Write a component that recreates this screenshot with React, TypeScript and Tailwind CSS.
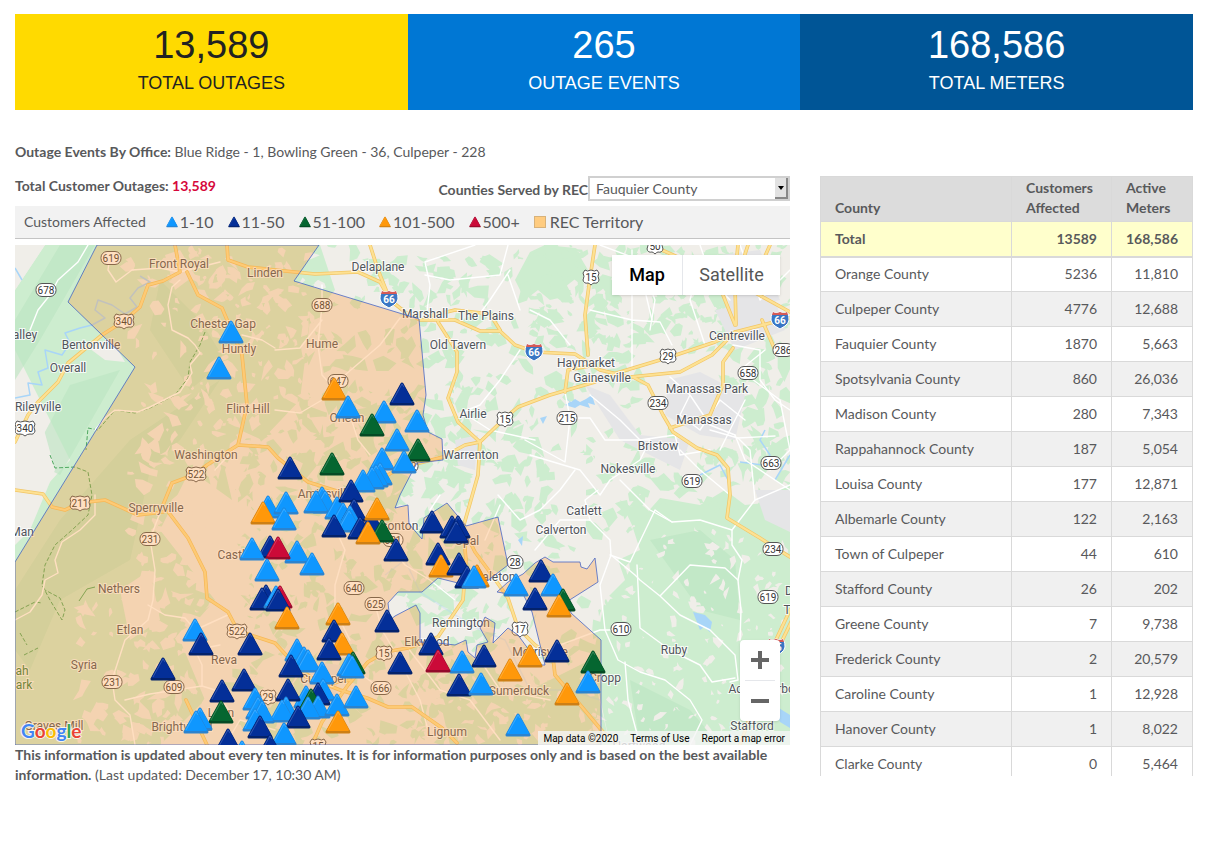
import React from "react";

interface StatProps {
    value: string;
    label: string;
    className: string;
}

type Level = "low" | "medium" | "high" | "severe" | "extreme";

const levelColors: Record<Level, { fill: string; edge: string }> = {
    low: { fill: "#0f97ff", edge: "#2b83cf" },
    medium: { fill: "#042f98", edge: "#04226b" },
    high: { fill: "#056630", edge: "#044a24" },
    severe: { fill: "#ff980a", edge: "#cd7f14" },
    extreme: { fill: "#cb0a38", edge: "#930a2b" },
};

const legend: { level: Level; label: string }[] = [
    { level: "low", label: "1-10" },
    { level: "medium", label: "11-50" },
    { level: "high", label: "51-100" },
    { level: "severe", label: "101-500" },
    { level: "extreme", label: "500+" },
];

const counties = [
    ["Orange County", "5236", "11,810"],
    ["Culpeper County", "4776", "12,688"],
    ["Fauquier County", "1870", "5,663"],
    ["Spotsylvania County", "860", "26,036"],
    ["Madison County", "280", "7,343"],
    ["Rappahannock County", "187", "5,054"],
    ["Louisa County", "177", "12,871"],
    ["Albemarle County", "122", "2,163"],
    ["Town of Culpeper", "44", "610"],
    ["Stafford County", "26", "202"],
    ["Greene County", "7", "9,738"],
    ["Frederick County", "2", "20,579"],
    ["Caroline County", "1", "12,928"],
    ["Hanover County", "1", "8,022"],
    ["Clarke County", "0", "5,464"],
];

// drawn in order, later markers lie on top
const markers: [Level, number, number][] = [
    ["low", 231, 332], ["low", 219, 368],
    ["severe", 334, 389], ["low", 348, 407], ["low", 384, 412],
    ["medium", 402, 394], ["high", 372, 425], ["low", 417, 421],
    ["low", 397, 440], ["high", 418, 450], ["low", 382, 459],
    ["low", 404, 462], ["medium", 290, 468], ["high", 332, 464],
    ["low", 380, 474], ["low", 376, 476], ["low", 372, 478],
    ["low", 363, 481], ["low", 268, 507], ["severe", 263, 513],
    ["low", 286, 503], ["low", 284, 519], ["low", 322, 498],
    ["low", 325, 502], ["low", 316, 502], ["low", 337, 508],
    ["low", 343, 514], ["medium", 351, 491], ["medium", 354, 510],
    ["low", 350, 517], ["low", 349, 521], ["medium", 334, 526],
    ["medium", 360, 528], ["medium", 372, 523], ["severe", 377, 509],
    ["high", 382, 531], ["severe", 368, 533], ["medium", 396, 550],
    ["medium", 432, 522], ["medium", 452, 527], ["medium", 458, 527],
    ["medium", 456, 532], ["medium", 438, 554], ["severe", 441, 566],
    ["medium", 459, 564], ["medium", 467, 577], ["severe", 477, 576],
    ["low", 474, 577], ["low", 516, 585], ["medium", 541, 571],
    ["medium", 535, 599], ["low", 553, 585], ["high", 563, 600],
    ["severe", 559, 606], ["medium", 557, 651], ["high", 593, 662],
    ["low", 588, 682], ["severe", 567, 694], ["severe", 530, 656],
    ["severe", 510, 670], ["medium", 484, 656], ["low", 462, 662],
    ["medium", 431, 644], ["extreme", 438, 661], ["medium", 400, 663],
    ["medium", 459, 685], ["low", 481, 684], ["low", 518, 725],
    ["medium", 387, 621], ["low", 297, 552], ["low", 312, 564],
    ["medium", 270, 547], ["extreme", 278, 548], ["low", 252, 549],
    ["low", 267, 570], ["medium", 266, 596], ["medium", 262, 599],
    ["low", 276, 597], ["extreme", 280, 597], ["medium", 278, 600],
    ["severe", 287, 618], ["severe", 338, 614], ["medium", 334, 631],
    ["severe", 342, 644], ["medium", 329, 649], ["low", 297, 650],
    ["low", 304, 658], ["low", 308, 661], ["medium", 291, 666],
    ["low", 322, 673], ["high", 353, 663], ["low", 349, 665],
    ["low", 352, 667], ["low", 323, 690], ["medium", 318, 694],
    ["low", 306, 697], ["high", 311, 700], ["low", 318, 707],
    ["low", 308, 708], ["low", 337, 705], ["low", 356, 697],
    ["medium", 288, 690], ["severe", 338, 722], ["low", 286, 708],
    ["low", 282, 711], ["medium", 298, 717], ["low", 284, 734],
    ["low", 195, 630], ["medium", 201, 644], ["medium", 250, 644],
    ["medium", 163, 669], ["medium", 244, 680], ["medium", 222, 691],
    ["high", 221, 712], ["low", 200, 719], ["low", 196, 722],
    ["low", 255, 699], ["low", 258, 708], ["low", 262, 712],
    ["low", 255, 720], ["medium", 260, 727], ["medium", 270, 746],
    ["low", 242, 752], ["medium", 228, 740],
];

const towns: [string, number, number][] = [
    ["Front Royal", 179, 268], ["Linden", 265, 277], ["Chester Gap", 223, 328],
    ["Huntly", 239, 353], ["Hume", 322, 348], ["Bentonville", 91, 349],
    ["Overall", 68, 372], ["alley", 25, 339], ["Rileyville", 38, 411],
    ["Flint Hill", 248, 413], ["Washington", 206, 459], ["Orlean", 347, 422],
    ["Sperryville", 156, 512], ["Nethers", 119, 593], ["Etlan", 130, 634],
    ["Syria", 84, 669], ["Man", 22, 536], ["Castleton", 243, 559],
    ["Reva", 224, 664], ["Graves Mill", 54, 730], ["Brightwood", 182, 731],
    ["Leon", 221, 717], ["Amissville", 325, 498], ["Jeffersonton", 384, 530],
    ["Delaplane", 378, 271], ["Marshall", 425, 318], ["The Plains", 486, 320],
    ["Old Tavern", 458, 349], ["Haymarket", 586, 367], ["Gainesville", 602, 382],
    ["Centreville", 737, 340], ["Manassas Park", 707, 393],
    ["Manassas", 704, 424], ["Airlie", 473, 418], ["Bristow", 658, 450],
    ["Nokesville", 628, 473], ["Warrenton", 471, 459], ["Catlett", 584, 515],
    ["Calverton", 561, 534], ["Opal", 467, 545], ["Bealeton", 492, 581],
    ["Remington", 461, 627], ["Elkwood", 427, 646], ["Morrisville", 540, 656],
    ["Culpeper", 324, 683], ["Sumerduck", 519, 695], ["Cropp", 605, 682],
    ["Lignum", 447, 736], ["Ruby", 674, 654], ["Aquia Harbour", 767, 693],
    ["Stafford", 752, 730], ["Hartwood", 639, 750], ["D", 789, 595], ["T", 787, 614],
];

type ShieldKind = "state" | "us" | "interstate";

const shields: [ShieldKind, string, number, number][] = [
    ["state", "619", 111, 258], ["state", "678", 46, 290], ["us", "340", 124, 321],
    ["us", "340", 25, 428], ["state", "688", 322, 305], ["state", "647", 338, 381],
    ["us", "522", 196, 474], ["us", "211", 80, 503], ["state", "231", 150, 539],
    ["state", "231", 112, 682], ["state", "609", 174, 687], ["us", "522", 237, 631],
    ["state", "640", 354, 588], ["state", "625", 375, 604], ["us", "15", 384, 653],
    ["state", "666", 381, 688], ["us", "29", 268, 697], ["state", "621", 393, 540],
    ["us", "15", 591, 277], ["us", "50", 655, 246], ["us", "29", 668, 356],
    ["state", "234", 658, 403], ["state", "658", 748, 373], ["state", "286", 783, 350],
    ["us", "15", 505, 419], ["state", "215", 567, 418], ["state", "663", 771, 463],
    ["state", "619", 692, 481], ["state", "234", 773, 549], ["state", "28", 515, 562],
    ["us", "17", 520, 629], ["state", "610", 621, 629], ["state", "619", 768, 597],
    ["state", "802", 408, 466], ["us", "15", 318, 746],
    ["interstate", "66", 389, 299], ["interstate", "66", 534, 352],
    ["interstate", "66", 780, 320], ["interstate", "95", 776, 647],
];

const highways = [
    "M227 245 228 260 248 267 275 270 315 274 358 272 380 282 390 300 405 312 420 320 455 320 480 331 500 331 515 345 535 352 575 354 600 370 630 377 680 372 712 355 735 332 790 318",
    "M370 245 378 270 390 300M430 316 455 310 490 314 500 330",
    "M175 245 180 272 163 281 148 285 140 307 124 321 102 335 68 363 58 382 38 402 28 415 15 442",
    "M187 272 198 295 222 308 242 355 247 405 238 445 207 465 196 474 172 483 163 505 188 538 205 572 207 598 228 612 238 631 275 643 298 668 322 685",
    "M238 445 268 447 278 458 308 482 340 492 365 488 400 468 443 457 465 445 480 442",
    "M15 490 43 494 52 507 65 510 80 503 105 500 138 515 163 512",
    "M438 322 457 352 457 372 448 398 458 422 480 442 478 475 463 528 475 552 492 575 508 598 518 628 535 645 553 658 555 675 603 732 620 745",
    "M480 442 505 418 518 407 550 395 595 382M610 375 670 357 715 342 735 332",
    "M595 245 590 278 585 315 588 355M595 365 568 370 565 392",
    "M633 377 648 385 663 415 673 432 697 448 717 455 728 468 730 495 727 518 760 538 790 557",
    "M733 348 723 362 723 385 710 415 670 428",
    "M463 528 466 560 463 600 438 637 408 648 385 652 368 662 348 685 322 722 312 745",
    "M300 674 340 690 367 698 388 707 412 707 442 728 457 743",
    "M738 245 735 275 723 295 735 325M748 245 735 285 736 325M770 245 750 290 790 312M762 320 775 350M655 247 680 258 712 290",
    "M790 610 775 642 760 690 748 722 740 745M793 618 780 645",
    "M207 745 186 700M322 685 350 680",
];

const roads = [
    "M88 245 78 262 58 280 50 295 38 310 30 330M110 255 108 270 116 282 132 270 160 268 180 272 220 262",
    "M180 280 172 287 168 305 172 330 188 338 195 345 200 353 190 365 192 373 180 392 150 407 138 412 115 410 105 418 95 430",
    "M242 335 262 340 275 348M322 285 322 305 318 345 322 375 345 400 358 440 370 455 M275 350 300 348 322 320",
    "M475 245 425 262 430 285 427 312M425 275 450 280 500 275 508 245M510 270 490 300 475 320M508 275 520 310",
    "M275 410 300 413 322 400 345 375 380 345 400 318M238 445 215 470M520 350 500 380 480 405 462 412 490 430 535 440",
    "M590 310 632 320 660 322 672 345M632 250 632 370M600 245 640 260 655 300 650 330M700 260 690 300 700 330 705 345",
    "M530 310 550 320 570 345M640 270 652 320M590 395 620 420 640 440 675 435 680 455 710 450",
    "M565 392 570 418 565 462 525 440M570 418 590 418 605 440 650 440 640 460 610 480 600 495 580 470 530 455",
    "M670 377 690 395 710 425 735 435M690 395 680 415 700 430 720 400 745 420M733 345 760 350 760 380 775 400 790 410",
    "M735 435 745 460 790 490M710 430 738 438 775 436M730 495 700 470 680 450",
    "M590 520 585 500 598 490M620 480 650 510 672 522 700 520 732 530 755 500 790 485",
    "M672 522 655 510M655 510 630 562 610 555M590 520 610 540 611 555 600 585 605 630 618 660 640 672 665 680 690 700 702 720 690 745",
    "M611 555 635 575 640 580 660 596 690 565 725 568 738 580 741 610 740 640M660 596 680 615 710 630 735 655 738 680 730 682",
    "M637 565 640 628 670 650 700 665 712 682 735 678M560 645 600 630 625 630M625 662 628 700 640 745",
    "M732 530 732 545 742 560 738 580M738 438 750 450 755 500",
    "M163 505 150 539 155 570 153 600 148 620 125 640 112 680 115 700 130 715 135 745M148 605 165 615 185 618 195 630 230 614",
    "M125 700 150 694 202 686 202 665 195 650 220 645M202 686 215 690 230 712",
    "M95 495 95 515 80 530 62 542 55 560 58 573 45 580 42 595 30 612 15 620",
    "M322 500 345 550 335 585 335 610 350 640M370 520 405 565 430 580 455 600M375 604 382 630 395 652 420 700 428 730",
    "M440 495 430 510M500 505 485 540M498 495 520 520 540 510 560 490 575 470M535 550 560 520 590 520",
    "M408 648 440 690 470 700 500 740M340 640 355 670 380 688M275 730 240 720 225 745M480 660 500 690 550 700",
    "M740 245 760 300 790 270M700 245 712 280 730 300M765 350 740 370 780 400 790 450 770 470M745 400 720 450",
];

// pseudo random patches of woodland or clearing, stable between renders
const scatter = (
    seed: number,
    count: number,
    [x0, y0, x1, y1]: number[],
    size: number
) => {
    let state = seed;
    const next = () => {
        state = (state * 1103515245 + 12345) % 2147483648;
        return state / 2147483648;
    };
    let d = "";
    for (let i = 0; i < count; i++) {
        const cx = x0 + next() * (x1 - x0);
        const cy = y0 + next() * (y1 - y0);
        const scale = size * (0.3 + next());
        const turn = next() * Math.PI;
        const points: string[] = [];
        for (let k = 0; k < 6; k++) {
            const angle = (k / 6) * Math.PI * 2;
            const radius = scale * (0.15 + next());
            const px = Math.cos(angle) * radius;
            const py = Math.sin(angle) * radius * 0.6;
            points.push(
                `${(cx + px * Math.cos(turn) - py * Math.sin(turn)).toFixed(1)} ${(
                    cy +
                    px * Math.sin(turn) +
                    py * Math.cos(turn)
                ).toFixed(1)}`
            );
        }
        d += `M${points.join(" ")}Z`;
    }
    return d;
};

const woods = [
    scatter(11, 230, [300, 245, 540, 520], 13),
    scatter(23, 190, [530, 245, 730, 350], 12),
    scatter(29, 40, [730, 245, 790, 350], 9),
    scatter(37, 110, [490, 350, 640, 540], 12),
    scatter(41, 60, [640, 440, 790, 520], 13),
    scatter(59, 330, [240, 400, 470, 745], 13),
    scatter(67, 110, [380, 540, 600, 745], 12),
    scatter(71, 50, [720, 350, 790, 460], 14),
].join("");

const clearings = [
    scatter(83, 190, [130, 400, 260, 745], 11),
    scatter(89, 130, [130, 250, 330, 400], 10),
    scatter(97, 130, [590, 520, 790, 745], 7),
    scatter(101, 70, [400, 670, 600, 745], 9),
    scatter(103, 50, [80, 600, 200, 745], 12),
].join("");

const territory =
    "M97 245 68 302 135 367 15 562V745H601V640L571 613 568 601 598 582 595 558 587 569 581 567 580 562H553L545 557 535 563 523 574 508 582 497 592 515 595 522 592 532 612 545 665H540L518 635 508 628 493 643 495 623 485 617 480 628 488 642 477 645 475 658 468 652 466 640 455 645 438 643 420 642V613L416 605 395 616 390 620 388 603 398 592H422L438 578 458 583 482 585 508 565 498 517 466 526 447 503 424 518 422 539 409 524 408 505 395 508 400 495 412 472 417 463 443 460 442 439 428 432 423 415 426 395 419 319 294 281 319 245Z";

const Triangle: React.FC<{ level: Level }> = ({ level }) => (
    <>
        <path
            d="M-11 10 0-10 11 10Z"
            fill={levelColors[level].edge}
            stroke={levelColors[level].edge}
            strokeWidth="3"
            strokeLinejoin="round"
        />
        <path
            d="M-10 8 0-10 10 8Z"
            fill={levelColors[level].fill}
            stroke={levelColors[level].fill}
            strokeWidth="2"
            strokeLinejoin="round"
        />
        <path
            d="M-10 8 0-10 2-7"
            fill="none"
            stroke="#fff"
            strokeOpacity="0.18"
        />
    </>
);

const Shield: React.FC<{ kind: ShieldKind; label: string }> = ({
    kind,
    label,
}) => {
    if (kind === "interstate") {
        return (
            <>
                <path
                    d="M-7-8Q-4-6 0-8 4-6 7-8 12 1 5 6L0 9-5 6Q-12 1-7-8Z"
                    fill="#3a76c4"
                    stroke="#fff"
                />
                <path d="M-7-8Q-4-6 0-8 4-6 7-8L8-5H-8Z" fill="#d65a56" />
                <text y="4" fontSize="10" fontWeight="700" fill="#fff" textAnchor="middle">
                    {label}
                </text>
            </>
        );
    }
    const w = label.length > 2 ? 10 : 8;
    return (
        <>
            {kind === "state" ? (
                <rect
                    x={-w}
                    y="-6.5"
                    width={w * 2}
                    height="13"
                    rx="6"
                    fill="#fff"
                    stroke="#555"
                />
            ) : (
                <path
                    d={`M${-w + 2}-7Q${-w / 2}-5 0-7 ${w / 2}-5 ${w - 2}-7L${w}-4Q${
                        w - 2
                    }-1 ${w} 3 ${w - 1} 7 ${w - 5} 6 2 6 0 8-2 6 ${-w + 5} 6 ${
                        -w + 1
                    } 7 ${-w} 3 ${-w + 2}-1 ${-w}-4Z`}
                    fill="#fff"
                    stroke="#555"
                />
            )}
            <text y="4" fontSize="10" fill="#333" textAnchor="middle">
                {label}
            </text>
        </>
    );
};

const OutageMap = () => (
    <svg
        viewBox="15 245 775 500"
        preserveAspectRatio="xMidYMid slice"
        className="block w-full h-[500px] font-['Roboto',sans-serif]"
        role="img"
        aria-label="Outage map"
    >
        <path d="M15 245H790V745H15Z" fill="#f0eee9" />
        <g fill="#cdedcf">
            <path d="M45 245H320L335 290 310 320 300 400 262 440 240 430 225 470 232 500 190 470 160 530 215 600 180 640 205 700 160 745H15V520L70 460 15 350V290Z" />
            <path d="M530 252 545 245 575 248 588 270 565 282 572 295 550 300 538 290 525 300 515 280Z" />
            <path d="M620 500 645 515 660 498 700 505 725 490 745 505 790 500V745H610L592 660 605 600 625 580 618 560 640 550 632 525Z" />
            <path d="M480 665 530 690 590 660 610 745H450L440 700Z" />
            <path d={woods} />
        </g>
        <g fill="#bbe5c2" fillOpacity="0.6">
            <path d="M60 245 95 245 40 340 15 380V320ZM70 385 120 370 60 475 30 460Z" />
            <path d="M60 520 130 440 190 400 220 380 180 440 150 470 130 560 60 600 30 670 15 650V590ZM160 280 200 320 225 360 190 390 150 330Z" />
            <path d="M650 540 700 530 735 560 740 620 700 610ZM630 680 690 710 720 745H640Z" />
        </g>
        <path
            d="M15 290 45 245H15ZM15 400 40 415 55 470 30 530 15 545ZM85 345 112 340 125 362 105 360ZM165 255 180 250 195 275 175 290ZM120 590 150 570 160 620 130 640Z"
            fill="#f0eee9"
        />
        <path d={clearings} fill="#f0eee9" />
        <path
            d="M668 380 700 372 745 395 735 440 700 435 665 415ZM585 385 610 395 640 435 690 440 680 470 620 440ZM715 310 775 300 785 330 735 350ZM755 490H790V532L765 520ZM455 440 478 435 475 470 458 465ZM300 660 340 665 335 700 305 700ZM720 255 760 250 780 300 730 310Z"
            fill="#e5e5e7"
        />
        <g fill="none" stroke="#a8d5f8" strokeWidth="1.5" strokeLinejoin="round">
            <path d="M140 276 150 282 138 288 130 298 137 307 125 314 112 305 98 300 95 310 105 318 92 325 80 328 65 333 70 343 62 355 45 350 48 368 38 372 42 385 28 383 30 395 15 398" />
            <path d="M765 430 760 440 770 455 762 465 740 462M700 475 720 465 728 480M775 480 790 455M15 268 22 280" />
            <path d="M385 575 405 560 420 592 455 615 480 630 505 640 530 690 570 690 600 700" strokeOpacity="0.3" />
        </g>
        <path
            d="M565 397 571 402 575 399 580 402 586 399 592 395 595 405 588 403 590 408 580 405 575 408 565 405 570 402ZM693 612 705 615 712 622 710 632 704 627 700 630ZM774 705 790 715V728L780 722ZM518 540 523 536 522 546ZM540 418 547 416 543 424Z"
            fill="#a8d5f8"
        />
        <g fill="none" stroke="#4fa860" strokeDasharray="4 2">
            <path d="M205 332 200 345 190 362 188 378 175 395 150 408 135 413 115 410 98 430 88 428 86 450M50 455 55 468 75 467 88 472 92 495 88 515 72 530 55 545 45 565 42 585 50 600 62 620 65 610 60 598 45 590M15 612 35 602 42 603M20 633 27 645M24 655 38 648" />
        </g>
        <path d="M79 601 87 589 95 587" fill="none" stroke="#4fa860" />
        <g fill="none" strokeLinejoin="round" strokeLinecap="round">
            <g stroke="#fff" strokeWidth="1.4">
                {roads.map(d => (
                    <path key={d} d={d} />
                ))}
            </g>
            <g stroke="#f2c665" strokeWidth="3.6">
                {highways.map(d => (
                    <path key={d} d={d} />
                ))}
            </g>
            <g stroke="#fde193" strokeWidth="2.2">
                {highways.map(d => (
                    <path key={d} d={d} />
                ))}
            </g>
        </g>
        {shields.map(([kind, label, x, y]) => (
            <g key={`${label}-${x}-${y}`} transform={`translate(${x} ${y})`}>
                <Shield kind={kind} label={label} />
            </g>
        ))}
        <g
            fontSize="12"
            fill="#50545b"
            stroke="#fff"
            strokeWidth="2"
            strokeOpacity="0.8"
            paintOrder="stroke"
            textAnchor="middle"
        >
            {towns.map(([name, x, y]) => (
                <text key={name} x={x} y={y}>
                    {name}
                </text>
            ))}
            <g fill="#33803f">
                <text x="22" y="675">ah</text>
                <text x="24" y="689">ark</text>
            </g>
        </g>
        <path
            d={territory}
            fill="#ff9433"
            fillOpacity="0.3"
            stroke="#3d5fc4"
            strokeOpacity="0.75"
        />
        {markers.map(([level, x, y], i) => (
            <g key={i} transform={`translate(${x} ${y})`}>
                <Triangle level={level} />
            </g>
        ))}
    </svg>
);

const Stat: React.FC<StatProps> = ({ value, label, className }) => (
    <div
        className={`h-24 pt-2 text-center font-['Liberation_Sans',Arial,sans-serif] ${className}`}
    >
        <div className="text-[38px] leading-[46px]">{value}</div>
        <div className="text-lg leading-[30px]">{label}</div>
    </div>
);

const cell = "border border-[#d9d9d9] px-[14px]";

export default function App() {
    return (
        <main className="px-[15px] pt-[14px] pb-4 bg-white text-[#58595b] text-sm leading-5 font-['Lato',sans-serif]">
            <section className="grid grid-cols-3">
                <Stat
                    value="13,589"
                    label="TOTAL OUTAGES"
                    className="bg-[#ffda00] text-[#222]"
                />
                <Stat
                    value="265"
                    label="OUTAGE EVENTS"
                    className="bg-[#0077d4] text-white"
                />
                <Stat
                    value="168,586"
                    label="TOTAL METERS"
                    className="bg-[#005596] text-white"
                />
            </section>
            <p className="mt-8">
                <b>Outage Events By Office:</b> Blue Ridge - 1, Bowling Green - 36,
                Culpeper - 228
            </p>
            <div className="mt-[14px] flex items-start gap-[30px]">
                <section className="flex-1 min-w-0">
                    <div className="flex justify-between h-[30px]">
                        <b>
                            Total Customer Outages:{" "}
                            <span className="text-[#d6083b]">13,589</span>
                        </b>
                        <div className="flex items-start">
                            <label htmlFor="county" className="font-bold mt-1">
                                Counties Served by REC
                            </label>
                            <div className="relative">
                                <select
                                    id="county"
                                    className="block appearance-none w-[202px] h-[25px] pl-1.5 pr-5 bg-white border-2 border-[#d0d0d0] leading-5"
                                >
                                    <option>Fauquier County</option>
                                </select>
                                <span className="absolute right-0.5 top-0.5 bottom-0.5 w-[13px] bg-[#e2e2e2] border-r-2 border-b-2 border-[#888] pointer-events-none flex items-center justify-center">
                                    <svg viewBox="0 0 6 4" className="w-1.5 h-1">
                                        <path d="M0 0H6L3 4Z" />
                                    </svg>
                                </span>
                            </div>
                        </div>
                    </div>
                    <div className="flex items-center h-[33px] pl-[9px] bg-[#f2f2f2] border-b border-[#c4c4c4]">
                        <span className="mr-5">Customers Affected</span>
                        <ul className="flex gap-[14px] text-base">
                            {legend.map(({ level, label }) => (
                                <li key={level} className="flex items-center gap-0.5">
                                    <svg viewBox="-13 -13 26 26" className="w-3 h-3">
                                        <Triangle level={level} />
                                    </svg>
                                    {label}
                                </li>
                            ))}
                            <li className="flex items-center gap-1">
                                <span className="size-3 bg-[#ffcc80] border border-[#d8b27a]" />
                                REC Territory
                            </li>
                        </ul>
                    </div>
                    <div className="relative mt-1.5 overflow-hidden font-['Roboto',sans-serif]">
                        <OutageMap />
                        <div className="absolute top-[10px] right-[10px] flex h-10 bg-white shadow text-lg">
                            <button className="w-[70px] font-medium text-black">
                                Map
                            </button>
                            <button className="w-[98px] border-l border-gray-200 text-[#565656]">
                                Satellite
                            </button>
                        </div>
                        <div className="absolute right-[10px] bottom-6 w-10 bg-white rounded-sm shadow text-[#666]">
                            <button
                                aria-label="Zoom in"
                                className="flex w-full h-10 items-center justify-center"
                            >
                                <svg viewBox="0 0 18 18" className="w-[18px]">
                                    <path d="M7 0h4v7h7v4h-7v7H7v-7H0V7h7Z" fill="currentColor" />
                                </svg>
                            </button>
                            <div className="h-px mx-[5px] bg-gray-200" />
                            <button
                                aria-label="Zoom out"
                                className="flex w-full h-10 items-center justify-center"
                            >
                                <svg viewBox="0 0 18 4" className="w-[18px]">
                                    <path d="M0 0h18v4H0Z" fill="currentColor" />
                                </svg>
                            </button>
                        </div>
                        <svg
                            viewBox="0 0 72 28"
                            className="absolute left-1 bottom-0 w-[72px] h-7"
                            aria-label="Google"
                        >
                            <text
                                x="2"
                                y="21"
                                fontSize="19"
                                fontWeight="700"
                                stroke="#fff"
                                strokeWidth="2"
                                strokeOpacity="0.8"
                                paintOrder="stroke"
                                className="font-['Lato',sans-serif]"
                            >
                                <tspan fill="#4285f4">G</tspan>
                                <tspan fill="#ea4335">o</tspan>
                                <tspan fill="#fbbc05">o</tspan>
                                <tspan fill="#4285f4">g</tspan>
                                <tspan fill="#34a853">l</tspan>
                                <tspan fill="#ea4335">e</tspan>
                            </text>
                        </svg>
                        <div className="absolute right-0 bottom-0 flex gap-3 h-[14px] pt-0.5 px-[5px] bg-[#f5f5f5]/80 text-[10px] leading-3 text-black">
                            <span>Map data ©2020</span>
                            <a href="#terms">Terms of Use</a>
                            <a href="#report">Report a map error</a>
                        </div>
                    </div>
                    <p>
                        <b>
                            This information is updated about every ten minutes. It is
                            for information purposes only and is based on the best
                            available information.
                        </b>{" "}
                        (Last updated: December 17, 10:30 AM)
                    </p>
                </section>
                <section className="w-[373px] max-h-[600px] overflow-y-auto [scrollbar-width:none]">
                    <table className="w-full border-collapse table-fixed">
                        <thead>
                            <tr className="h-[45px] bg-[#dcdcdc] text-left align-bottom">
                                <th className={`${cell} border-[#c8c8c8] pb-[3px]`}>
                                    County
                                </th>
                                <th className={`${cell} border-[#c8c8c8] pb-[3px] w-[100px]`}>
                                    Customers Affected
                                </th>
                                <th className={`${cell} border-[#c8c8c8] pb-[3px] w-[81px]`}>
                                    Active Meters
                                </th>
                            </tr>
                        </thead>
                        <tbody>
                            <tr className="h-[35px] bg-[#ffffcc] font-bold border-b-2 border-[#d9d9d9]">
                                <td className={cell}>Total</td>
                                <td className={`${cell} text-right`}>13589</td>
                                <td className={`${cell} text-right`}>168,586</td>
                            </tr>
                            {counties.map(([name, affected, meters]) => (
                                <tr key={name} className="h-[35px] even:bg-white odd:bg-[#f0f0f0]">
                                    <td className={cell}>{name}</td>
                                    <td className={`${cell} text-right`}>{affected}</td>
                                    <td className={`${cell} text-right`}>{meters}</td>
                                </tr>
                            ))}
                        </tbody>
                    </table>
                </section>
            </div>
        </main>
    );
}
